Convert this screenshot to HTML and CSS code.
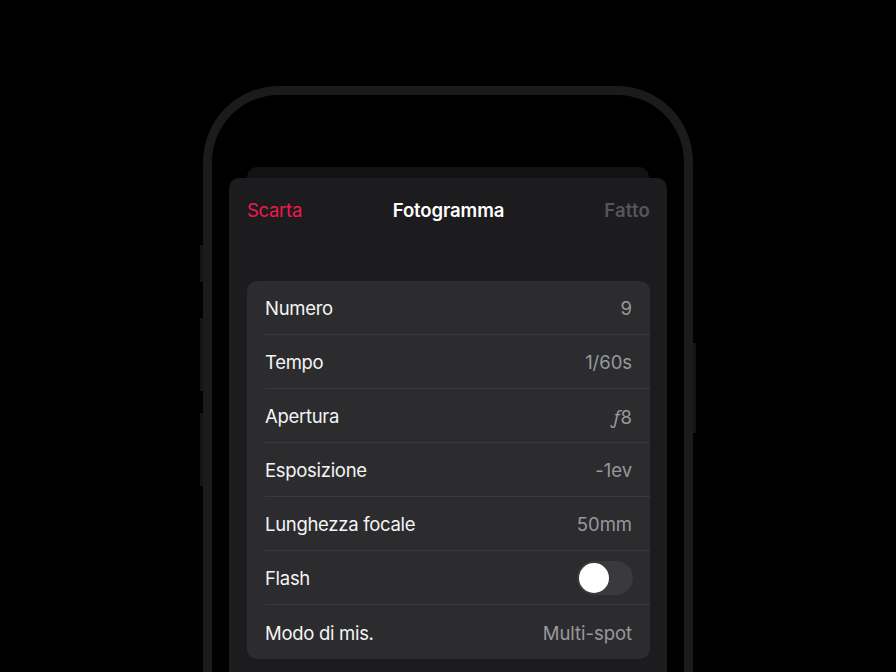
FILE: index.html
```html
<!DOCTYPE html>
<html lang="it">
<head>
<meta charset="utf-8">
<title>Fotogramma</title>
<link rel="stylesheet" href="styles.css">
</head>
<body>
<div class="stage">
  <div class="phone">
    <span class="btn btn-l1"></span>
    <span class="btn btn-l2"></span>
    <span class="btn btn-l3"></span>
    <span class="btn btn-r1"></span>
    <div class="screen">
      <div class="back-sheet"></div>
      <div class="sheet">
        <div class="nav">
          <span class="nav-left">Scarta</span>
          <span class="nav-title">Fotogramma</span>
          <span class="nav-right">Fatto</span>
        </div>
        <div class="group">
          <div class="row"><span class="label">Numero</span><span class="value">9</span></div>
          <div class="row"><span class="label">Tempo</span><span class="value">1/60s</span></div>
          <div class="row"><span class="label">Apertura</span><span class="value"><span class="fstop">ƒ</span>8</span></div>
          <div class="row"><span class="label">Esposizione</span><span class="value">-1ev</span></div>
          <div class="row"><span class="label">Lunghezza focale</span><span class="value">50mm</span></div>
          <div class="row"><span class="label">Flash</span><span class="toggle"><span class="knob"></span></span></div>
          <div class="row"><span class="label">Modo di mis.</span><span class="value">Multi-spot</span></div>
        </div>
      </div>
    </div>
  </div>
</div>
</body>
</html>
```
FILE: styles.css
```css
html, body {
  margin: 0;
  padding: 0;
  background: #000;
  height: 100%;
  overflow: hidden;
}
body {
  font-family: Inter, "Noto Sans", "Liberation Sans", sans-serif;
  -webkit-font-smoothing: antialiased;
}
.stage {
  padding-top: 86px;
  padding-left: 203px;
}
.phone {
  position: relative;
  width: 472px;
  height: 700px;
  border: 9px solid #1b1b1b;
  border-bottom: 0;
  border-radius: 76px 76px 0 0;
  background: #000;
}
.btn {
  position: absolute;
  width: 3px;
  background: #151515;
}
.btn-l1 { left: -12px; top: 150px; height: 37px; }
.btn-l2 { left: -12px; top: 223px; height: 73px; }
.btn-l3 { left: -12px; top: 318px; height: 73px; }
.btn-r1 { right: -12px; top: 248px; height: 90px; }
.screen {
  padding-top: 72px;
  display: flex;
  flex-direction: column;
  align-items: center;
}
.back-sheet {
  width: 402px;
  height: 11px;
  background: #121212;
  border-radius: 10px 10px 0 0;
}
.sheet {
  width: 438px;
  height: 620px;
  background: #1c1c1e;
  border-radius: 10px 10px 0 0;
  box-sizing: border-box;
  padding: 0 17px 0 18px;
}
.nav {
  height: 64px;
  display: grid;
  grid-template-columns: 1fr auto 1fr;
  align-items: center;
  font-size: 18.5px;
  letter-spacing: -0.3px;
}
.nav-left { color: #f2184f; justify-self: start; }
.nav-title { color: #fff; font-weight: 600; justify-self: center; letter-spacing: -0.1px; }
.nav-right { color: #55555a; font-weight: 600; justify-self: end; letter-spacing: 0.2px; }
.group {
  margin-top: 39px;
  background: #2c2c2e;
  border-radius: 10px;
  padding-left: 18px;
}
.row {
  height: 54px;
  display: flex;
  align-items: center;
  justify-content: space-between;
  padding-right: 18px;
  padding-top: 1px;
  box-sizing: border-box;
  border-bottom: 1px solid #3a3a3c;
  font-size: 18.5px;
  letter-spacing: -0.3px;
}
.row:last-child { border-bottom: 0; }
.label { color: #f4f4f5; }
.value { color: #98989d; letter-spacing: -0.05px; }
.fstop {
  font-family: "Noto Sans", "DejaVu Sans", sans-serif;
  font-style: italic;
  margin-right: 1px;
}
.toggle {
  width: 56px;
  height: 34px;
  margin-right: -1px;
  border-radius: 17px;
  background: #3a3a3e;
  display: flex;
  align-items: center;
  padding-left: 2px;
  box-sizing: border-box;
}
.knob {
  width: 30px;
  height: 30px;
  border-radius: 50%;
  background: #fff;
}
```
